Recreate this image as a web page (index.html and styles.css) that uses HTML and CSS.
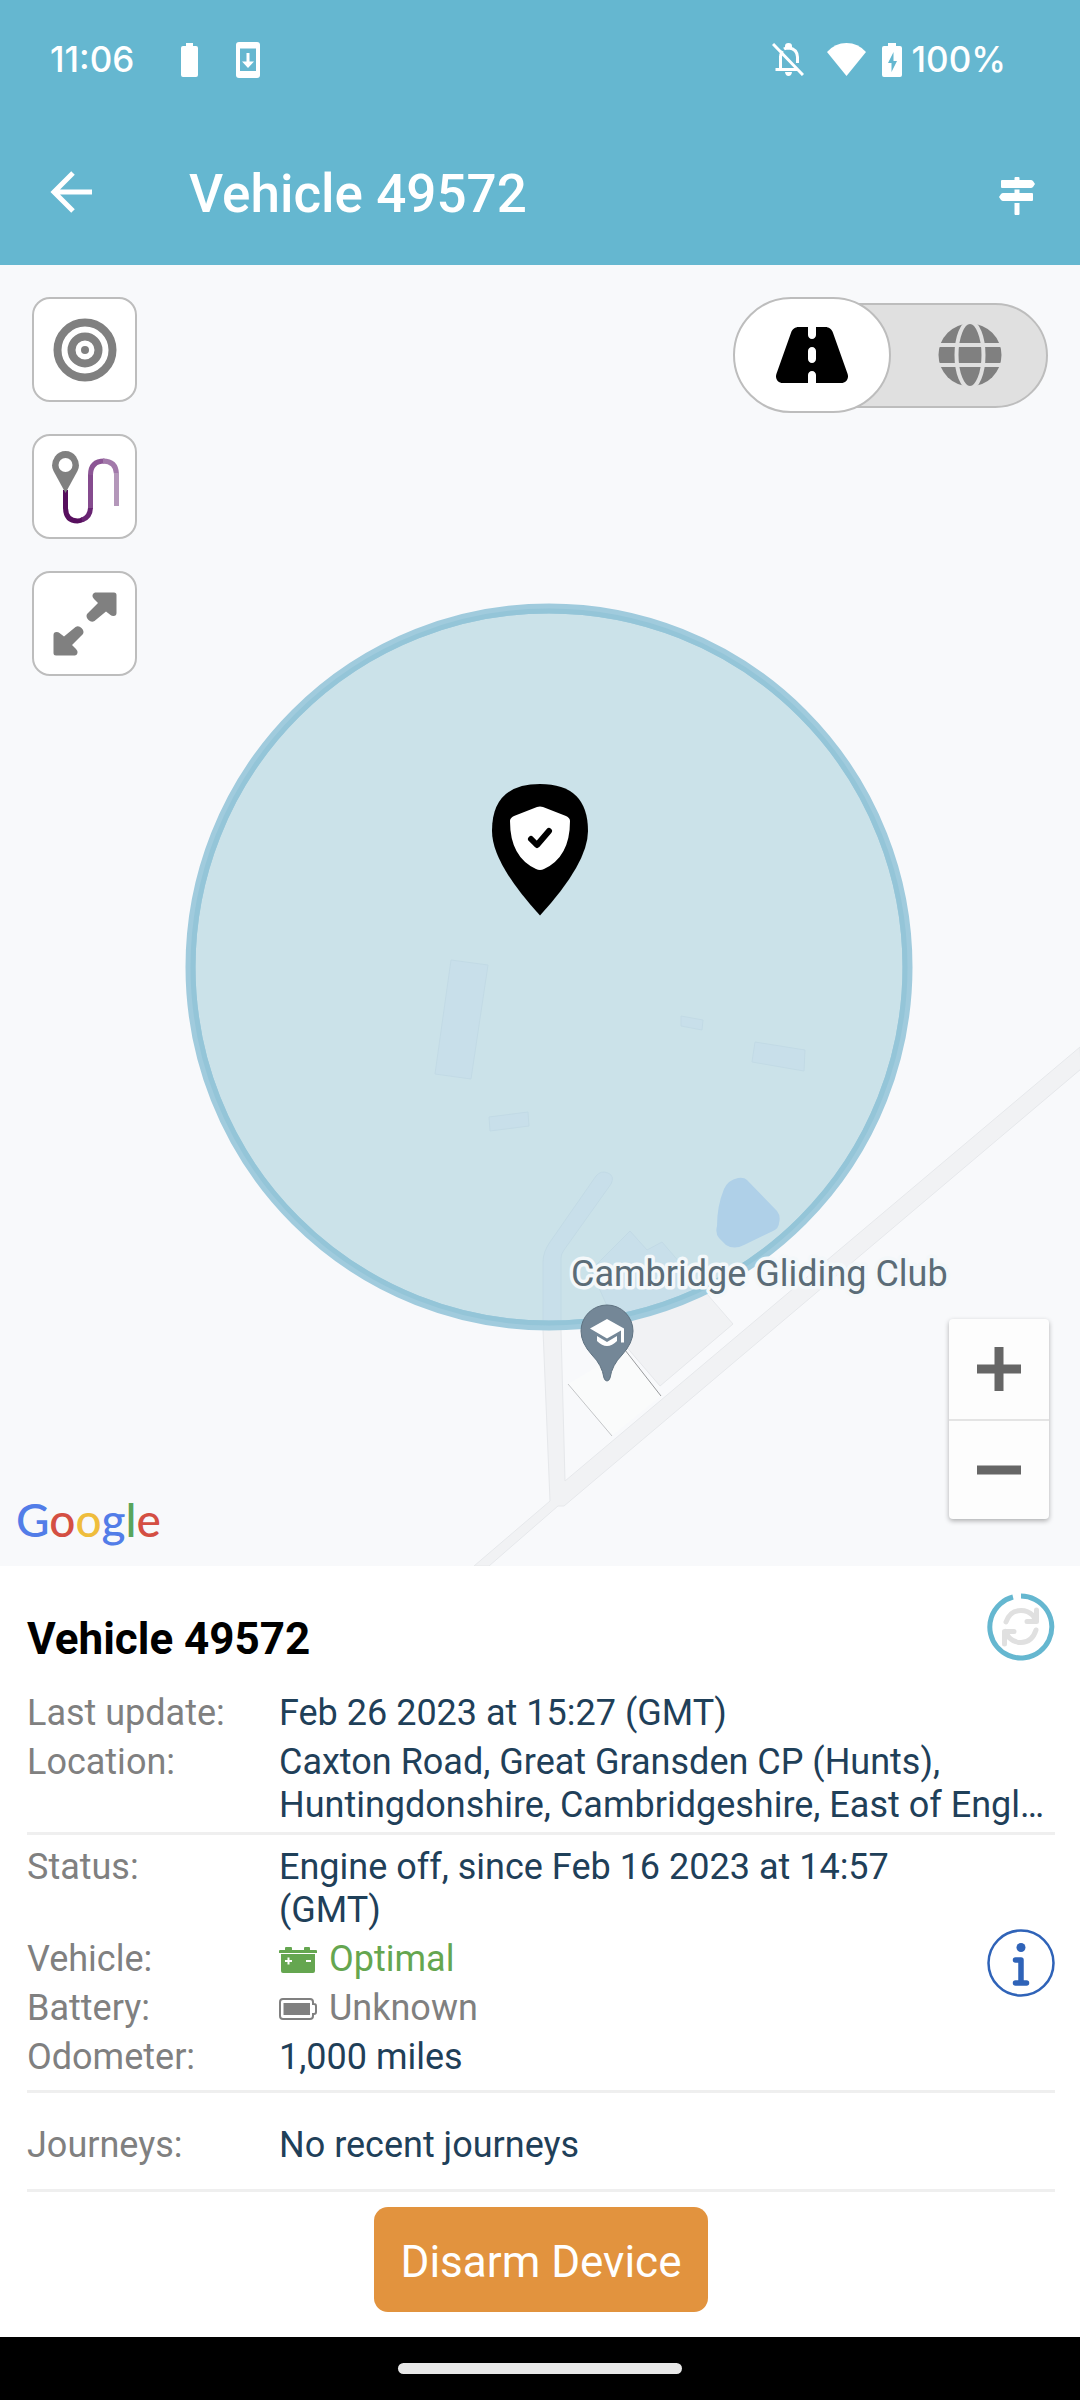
FILE: index.html
```html
<!DOCTYPE html>
<html lang="en">
<head>
<meta charset="utf-8">
<meta name="viewport" content="width=device-width, initial-scale=1">
<title>Vehicle 49572</title>
<link rel="stylesheet" href="styles.css">
</head>
<body>
<div class="status-bar">
  <div class="status-left">
    <span class="clock">11:06</span>
    <svg class="status-battery" width="17" height="34" viewBox="0 0 17 34" fill="#fff"><path d="M5 0h7v3h3q2 0 2 2v27q0 2-2 2H2q-2 0-2-2V5q0-2 2-2h3z"/></svg>
    <svg width="24" height="36" viewBox="0 0 24 36"><rect width="24" height="36" rx="3" fill="#fff"/><path d="M4 6.500h16v22.500H4z" fill="#65b7d0"/><path d="M10.500 11h3v8.500H18l-6 6.500-6-6.500h4.500z" fill="#fff"/></svg>
  </div>
  <div class="status-right">
    <svg class="status-bell" width="32" height="33" viewBox="0 0 32 33" fill="none" stroke="#fff" stroke-width="3"><path d="M1 1l30 31M3.500 26.500H26M8.500 26V14q0-3 2-6M12 6q1.500-1 5-1 8 1 8.500 9v6"/><path d="M13 6V3q0-3 3.500-3T20 3v3zM13 29h7q-.5 4-3.500 4T13 29z" fill="#fff" stroke="none"/></svg>
    <svg class="status-wifi" width="39" height="33" viewBox="0 0 39 33" fill="#fff"><path d="M0 9Q8 0 19.500 0T39 9L19.500 33z"/></svg>
    <svg class="status-charge" width="20" height="34" viewBox="0 0 20 34"><path d="M6 0h8v3h4q2 0 2 2v27q0 2-2 2H2q-2 0-2-2V5q0-2 2-2h4z" fill="#fff"/><path d="M11.500 9L6 20h3.500v9L15 18h-3.500z" fill="#65b7d0"/></svg>
    <span>100%</span>
  </div>
</div>
<header class="app-bar">
  <button class="icon-button" type="button" aria-label="Back"><svg width="42" height="42" viewBox="0 0 42 42" fill="none" stroke="#fff" stroke-width="5"><path d="M42 21H4M23 2L4 21l19 19"/></svg></button>
  <h1>Vehicle 49572</h1>
  <button class="icon-button directions" type="button" aria-label="Directions"><svg width="36" height="38" viewBox="0 0 36 38" fill="#fff"><path d="M15.500 1q0-1 1-1h3q1 0 1 1v2H32q1 0 2 1l2 3-2 3q-1 1-2 1H3q-1 0-1-1V4q0-1 1-1h12.500zM15.500 12.500h5V16H33q1 0 1 1v6q0 1-1 1H4q-1 0-2-1l-2-3 2-3q1-1 2-1h11.500zM15.500 26h5v11q0 1-1 1h-3q-1 0-1-1z"/></svg></button>
</header>
<main>
  <section class="map" aria-label="Map">
    <svg class="map-canvas" viewBox="0 265 1080 1301" preserveAspectRatio="xMidYMid slice">
      <defs>
        <clipPath id="fence"><circle cx="549" cy="967" r="354"/></clipPath>
        <g id="land">
          <path d="M451 960l37 5-17 114-36-5zM681 1016l22 4-1 10-21-4zM755 1042l50 8-1 21-52-9zM489 1117l39-5 1 14-39 5z"/>
          <path d="M591 1270l39-39 17 19 15-8 71 82-73 62-36-42z"/>
          <path d="M1080 1047L565 1481l-4-151V1258q0-4 3-8l47-66q4-8-3-11t-12 3l-46 66q-7 10-7 20v68l7 171-76 65h15l69-60h6l517-437z"/>
        </g>
      </defs>
      <use href="#land" fill="#f1f2f4" stroke="#e6e8eb"/>
      <path d="M568 1384l57-34 36 46-49 40z" fill="#fafbfb"/>
      <path d="M568 1384l44 52" stroke="#c4c6c8" fill="none"/>
      <path d="M625 1350l36 46" stroke="#999b9d" fill="none"/>
      <circle cx="549" cy="967" r="355" fill="#cbe2e9"/>
      <use href="#land" clip-path="url(#fence)" fill="#c8dfea" stroke="#c2dae5"/>
      <path d="M738 1178q6-1 9 2l30 31q4 5 2 12 0 5-6 8l-29 14q-10 5-18 0l-7-7q-4-5-2-12 0-20 7-37 4-9 14-11z" fill="#afd0e8"/>
      <circle cx="549" cy="967" r="358.500" fill="none" stroke="#a0cbdd" stroke-width="10"/>
      <circle cx="549" cy="967" r="356" fill="none" stroke="#94c5d8" stroke-width="5"/>
      <g class="place">
        <text x="571" y="1286">Cambridge Gliding Club</text>
        <path d="M607 1381q-2 0-3-3-2-13-12-23-11-12-11-24a26 26 0 0 1 52 0q0 12-11 24-10 10-12 23-1 3-3 3z" fill="#748797" stroke="#5f7281" stroke-width="1"/>
        <path d="M607 1319l17 9.500v14h-3v-12l-14 8-17-10z" fill="#fff"/><path d="M597 1336l10 6 10-6v5q-10 10-20 0z" fill="#fff"/>
      </g>
      <path d="M540 915.500Q492 863 492 831 492 784 540 784t48 47q0 32-48 84.500z"/>
      <path d="M537 807q3-1 6 0l23 9q4 2 4 5 0 36-26 48-4 2-8 0-26-12-26-48 0-3 4-5z" fill="#fff"/>
      <path d="M531 839l6 6 12-14" fill="none" stroke="#000" stroke-width="6" stroke-linecap="round" stroke-linejoin="round"/>
    </svg>
    <div class="map-tools">
      <button type="button" aria-label="Centre on vehicle"><svg width="64" height="64" viewBox="0 0 64 64" fill="none" stroke="#808080" stroke-width="8"><circle cx="32" cy="32" r="27.500"/><circle cx="32" cy="32" r="13.500"/><circle cx="32" cy="32" r="4" fill="#808080" stroke="none"/></svg></button>
      <button type="button" aria-label="Show route"><svg width="68" height="74" viewBox="0 0 68 74" fill="none" stroke-width="5"><path d="M14.500 40v17q0 14 12 14 3 0 6-2" stroke="#570f5e"/><path d="M31 70q8.500-3 8.500-13" stroke="#682472"/><path d="M39.500 58V24" stroke="#854b8e"/><path d="M39.500 25q0-14 14-14" stroke="#8c5595"/><path d="M52 11q13 0 13.500 13" stroke="#a279aa"/><path d="M65.500 23v33" stroke="#b497ba"/><path d="M14.500 43L2.500 21Q-1 14 4 6.500 8 1 14.500 1T25 6.500q5 7.500 1.500 14.500z" fill="#808080"/><circle cx="14.500" cy="15" r="7" fill="#fff"/></svg></button>
      <button type="button" aria-label="Full screen"><svg width="64" height="64" viewBox="0 0 64 64" fill="#808080"><path id="arrow" d="M42 .5h19q2.500 0 2.500 2.500v18q0 3-3 3-2 0-3-1L53 19.500 41.500 29q-3 2-6-1t-1.500-6L45 11l-4-4q-2-2-1.500-4t2.500-2.500z"/><use href="#arrow" transform="rotate(180 32 32)"/></svg></button>
    </div>
    <div class="map-type">
      <button class="map-type-road" type="button" aria-label="Road map" aria-pressed="true"><svg width="72" height="64" viewBox="0 0 576 512"><path d="M256 32H181c-27 0-51 17-60 43L3 407c-2 6-3 12-3 18 0 31 24 55 55 55h201v-64c0-18 14-32 32-32s32 14 32 32v64h201c31 0 55-24 55-55 0-6-1-12-3-18L455 75c-9-26-33-43-60-43h-75v64c0 18-14 32-32 32s-32-14-32-32zm64 192v64c0 18-14 32-32 32s-32-14-32-32v-64c0-18 14-32 32-32s32 14 32 32z"/></svg></button>
      <button class="map-type-globe" type="button" aria-label="Satellite map" aria-pressed="false"><svg width="64" height="64" viewBox="0 0 64 64"><circle cx="32" cy="32" r="31.500" fill="#808080"/><path d="M0 22h64M0 42h64" stroke="#e0e0e0" stroke-width="4"/><ellipse cx="32" cy="32" rx="13.500" ry="33" fill="none" stroke="#e0e0e0" stroke-width="4"/></svg></button>
    </div>
    <div class="zoom">
      <button type="button" aria-label="Zoom in"><svg width="44" height="44" viewBox="0 0 44 44" stroke="#666" stroke-width="9"><path d="M0 22h44M22 0v44"/></svg></button>
      <button type="button" aria-label="Zoom out"><svg width="44" height="44" viewBox="0 0 44 44" stroke="#666" stroke-width="9"><path d="M0 22h44"/></svg></button>
    </div>
    <div class="google"><span class="g-blue">G</span><span class="g-red">o</span><span class="g-yellow">o</span><span class="g-blue">g</span><span class="g-green">l</span><span class="g-red">e</span></div>
  </section>
  <section class="details">
    <div class="details-head">
      <h2>Vehicle 49572</h2>
      <button class="icon-button" type="button" aria-label="Refresh"><svg width="68" height="68" viewBox="0 0 68 68" fill="none"><path d="M34 3a31 31 0 1 1-8 1" stroke="#65b7d0" stroke-width="5"/><g stroke="#e0e0e0" stroke-width="5" stroke-linecap="round" stroke-linejoin="round"><path d="M19 29Q23 17.500 34 17.500q7 0 12 5l3 6M49.500 17v11.500H40M49 37q-4 12.500-15 12.500-7 0-12-5l-4-6M17.500 51V38.500H27"/></g></svg></button>
    </div>
    <dl class="group">
      <div class="row"><dt>Last update:</dt><dd>Feb 26 2023 at 15:27 (GMT)</dd></div>
      <div class="row"><dt>Location:</dt><dd>Caxton Road, Great Gransden CP (Hunts), Huntingdonshire, Cambridgeshire, East of Engl…</dd></div>
    </dl>
    <div class="group state">
      <dl>
        <div class="row"><dt>Status:</dt><dd>Engine off, since Feb 16 2023 at 14:57 (GMT)</dd></div>
        <div class="row"><dt>Vehicle:</dt><dd class="with-icon good"><svg width="38" height="26" viewBox="0 0 38 26" fill="currentColor"><path d="M7 0h5q1 0 1 1v2h12V1q0-1 1-1h4q1 0 1 1v2h6q1 0 1 1v2H0V4q0-1 1-1h5V1q0-1 1-1zM2 7h34v17q0 2-2 2H4q-2 0-2-2z"/><path d="M6 14h7M9.500 10.500v7M27 14h5" stroke="#fff" stroke-width="2"/></svg>Optimal</dd></div>
        <div class="row"><dt>Battery:</dt><dd class="with-icon unknown"><svg width="38" height="22" viewBox="0 0 38 22"><path d="M4 1h27q3 0 3 3v2h1q2 0 2 2v6q0 2-2 2h-1v2q0 3-3 3H4q-3 0-3-3V4q0-3 3-3z" fill="none" stroke="currentColor" stroke-width="2"/><path d="M4.500 5h26.500v12H4.500z" fill="currentColor"/></svg>Unknown</dd></div>
        <div class="row"><dt>Odometer:</dt><dd>1,000 miles</dd></div>
      </dl>
      <button class="icon-button" type="button" aria-label="Status information"><svg width="68" height="68" viewBox="0 0 68 68" fill="none" stroke="#2f63b8"><circle cx="34" cy="34" r="32.500" stroke-width="2.500"/><circle cx="34" cy="18.500" r="4.500" fill="#2f63b8" stroke="none"/><path d="M28.500 31H34v23M28.500 54h11" stroke-width="5.500" stroke-linecap="round" stroke-linejoin="round"/></svg></button>
    </div>
    <dl class="group journeys">
      <div class="row"><dt>Journeys:</dt><dd>No recent journeys</dd></div>
    </dl>
    <button class="disarm" type="button">Disarm Device</button>
  </section>
</main>
<div class="nav-bar"><span class="nav-handle"></span></div>
</body>
</html>
```
FILE: styles.css
```css
* {
  box-sizing: border-box;
}

body {
  display: flex;
  flex-direction: column;
  min-height: 100vh;
  margin: 0;
  background: #fff;
  color: #1f4059;
  font-family: Roboto, "Noto Sans", sans-serif;
  font-size: 36px;
  line-height: 43px;
}

h1, h2, dl, dd {
  margin: 0;
}

button {
  display: grid;
  place-items: center;
  padding: 0;
  border: 0;
  background: none;
  color: inherit;
  font: inherit;
}

svg {
  display: block;
  flex: none;
}

.icon-button {
  flex: none;
}

/* System status bar */
.status-bar {
  display: flex;
  justify-content: space-between;
  align-items: center;
  height: 119px;
  padding: 0 74px 0 50px;
  background: #65b7d0;
  color: #fff;
  font-family: Inter, sans-serif;
  font-size: 35px;
  font-weight: 500;
}

.status-left, .status-right {
  display: flex;
  align-items: center;
}

.status-battery {
  margin: 0 38px 0 47px;
}

.status-bell {
  margin-right: 23px;
}

.status-wifi {
  margin-right: 16px;
}

.status-charge {
  margin-right: 10px;
}

/* App bar */
.app-bar {
  display: flex;
  align-items: center;
  height: 146px;
  padding: 0 45px 0 50px;
  background: #65b7d0;
  color: #fff;
}

.app-bar h1 {
  flex: 1;
  margin-left: 97px;
  padding-top: 4px;
  font-size: 53px;
  line-height: 62px;
  font-weight: 500;
}

.directions {
  padding-top: 8px;
}

main {
  display: flex;
  flex: 1;
  flex-direction: column;
}

/* Map */
.map {
  position: relative;
  flex: 1;
  min-height: 720px;
  overflow: hidden;
  background: #f8f9fb;
}

.map-canvas {
  position: absolute;
  inset: 0;
  width: 100%;
  height: 100%;
}

.place text {
  fill: #5b6c77;
  stroke: #f4f8fa;
  stroke-width: 7px;
  stroke-linejoin: round;
  paint-order: stroke;
  font-size: 36px;
}

.map-tools {
  position: absolute;
  top: 32px;
  left: 32px;
  display: grid;
  gap: 32px;
}

.map-tools button {
  width: 105px;
  height: 105px;
  border: 2px solid #bdbdbd;
  border-radius: 18px;
  background: #fff;
}

.map-type {
  position: absolute;
  top: 32px;
  right: 32px;
  display: flex;
  align-items: center;
}

.map-type-road {
  z-index: 1;
  width: 158px;
  height: 116px;
  border: 2px solid #bdbdbd;
  border-radius: 58px;
  background: #fff;
}

.map-type-globe {
  width: 236px;
  height: 105px;
  margin-left: -79px;
  padding-left: 79px;
  border: 2px solid #bdbdbd;
  border-radius: 0 53px 53px 0;
  background: #e0e0e0;
}

.zoom {
  position: absolute;
  right: 31px;
  bottom: 47px;
  width: 100px;
  border-radius: 4px;
  background: #fdfdfd;
  box-shadow: 0 2px 5px rgba(0, 0, 0, .3);
}

.zoom button {
  width: 100%;
  height: 100px;
}

.zoom button + button {
  border-top: 2px solid #e4e4e4;
}

.google {
  position: absolute;
  bottom: 18px;
  left: 16px;
  font-family: Lato, sans-serif;
  font-size: 46px;
  font-weight: 500;
  line-height: 56px;
}

.g-blue {
  color: #527de8;
}

.g-red {
  color: #d44f43;
}

.g-yellow {
  color: #efbd3c;
}

.g-green {
  color: #58a55c;
}

/* Vehicle details */
.details {
  padding: 27px 25px 25px 27px;
}

.details-head {
  display: flex;
  justify-content: space-between;
  align-items: flex-start;
  margin-bottom: 27px;
}

.details-head h2 {
  padding-top: 20px;
  color: #000;
  font-size: 44px;
  line-height: 52px;
  font-weight: 700;
}

.group {
  padding-bottom: 5px;
  border-bottom: 3px solid #efefef;
}

.row {
  display: grid;
  grid-template-columns: 252px minmax(0, 1fr);
}

.row + .row {
  margin-top: 6px;
}

dt, .unknown {
  color: #808080;
}

.state {
  display: flex;
  align-items: center;
  padding: 11px 0;
}

.state dl {
  flex: 1;
  padding-right: 40px;
}

.with-icon {
  display: flex;
  align-items: center;
  gap: 12px;
}

.good {
  color: #65a650;
}

.journeys {
  padding: 31px 0 22px;
}

.disarm {
  height: 105px;
  margin: 15px auto 0;
  padding: 5px 27px 0;
  border-radius: 14px;
  background: #e2933e;
  color: #fff;
  font-size: 44px;
}

/* System navigation bar */
.nav-bar {
  display: grid;
  place-items: center;
  height: 63px;
  background: #000;
}

.nav-handle {
  width: 284px;
  height: 11px;
  border-radius: 6px;
  background: #e8e8e8;
}
```
